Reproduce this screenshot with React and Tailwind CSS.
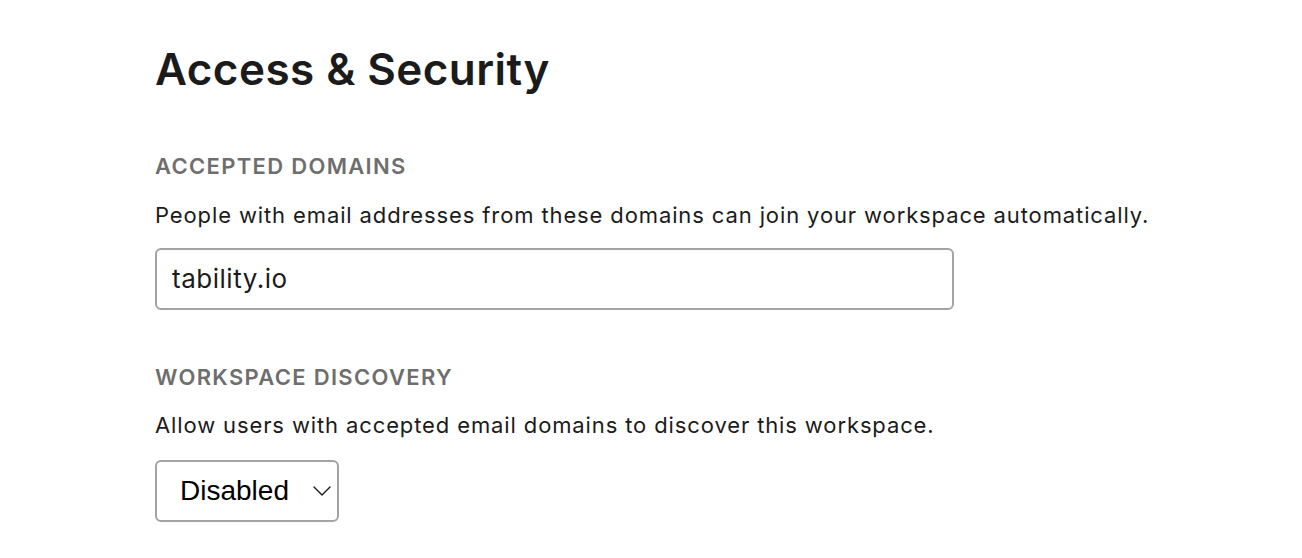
export default function App() {
  return (
    <div
      className="min-h-[558px] bg-white pl-[155px] pt-[43px] text-[#1b1b1b]"
      style={{ fontFamily: "Inter, 'Noto Sans', sans-serif" }}
    >
      <h1 className="text-[44px] font-semibold leading-[1.2] tracking-[0.01em]">Access &amp; Security</h1>

      <section className="mt-[57px]">
        <h2 className="text-[22px] font-semibold uppercase leading-[1.2] tracking-[0.06em] text-[#6e6e6e]">
          Accepted Domains
        </h2>
        <p className="mt-[23px] text-[22px] leading-[1.2] tracking-[0.04em]">
          People with email addresses from these domains can join your workspace automatically.
        </p>
        <input
          type="text"
          defaultValue="tability.io"
          className="mt-[19px] block h-[62px] w-[799px] rounded-[6px] border-2 border-[#a3a3a3] bg-white px-[15px] text-[26px] tracking-[0.02em] outline-none"
        />
      </section>

      <section className="mt-[54px]">
        <h2 className="text-[22px] font-semibold uppercase leading-[1.2] tracking-[0.06em] text-[#6e6e6e]">
          Workspace Discovery
        </h2>
        <p className="mt-[22px] text-[22px] leading-[1.2] tracking-[0.04em]">
          Allow users with accepted email domains to discover this workspace.
        </p>
        <div className="mt-[22px] flex h-[62px] w-[184px] items-center justify-between rounded-[6px] border-2 border-[#a3a3a3] bg-white pl-[23px] pr-[6px]">
          <span className="text-[28px] text-black" style={{ fontFamily: "'Liberation Sans', Arial, sans-serif" }}>
            Disabled
          </span>
          <svg width="18" height="10" viewBox="0 0 18 10" fill="none" stroke="#1b1b1b" strokeWidth="1.4" strokeLinecap="round" strokeLinejoin="round">
            <path d="M1 1l8 8 8-8" />
          </svg>
        </div>
      </section>
    </div>
  );
}
